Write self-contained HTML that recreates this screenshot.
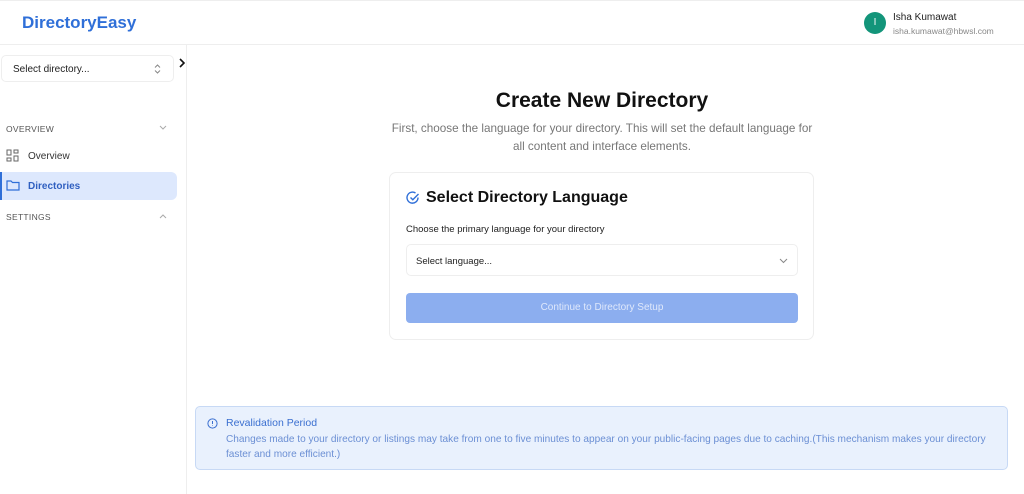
<!DOCTYPE html>
<html><head><style>
*{box-sizing:border-box;margin:0;padding:0}
body{width:1024px;height:494px;overflow:hidden;background:#fff;font-family:"Liberation Sans",sans-serif;position:relative;color:#111}
.hdr{position:absolute;left:0;top:0;width:1024px;height:45px;border-bottom:1px solid #eee;border-top:1px solid #eee}
.logo{position:absolute;left:22px;top:12px;font-size:17px;font-weight:bold;color:#2f6fd8}
.av{position:absolute;left:864px;top:11px;width:22px;height:22px;border-radius:50%;background:#13957a;color:#fff;font-size:10px;text-align:center;line-height:22px}
.nm{position:absolute;left:893px;top:11px;font-size:10px;color:#222}
.em{position:absolute;left:893px;top:25px;font-size:8.5px;color:#888}
.side{position:absolute;left:0;top:45px;width:187px;height:449px;border-right:1px solid #eee}
.sel{position:absolute;left:1px;top:55px;width:173px;height:27px;border:1px solid #eee;border-radius:5px;font-size:10px;padding:8px 11px;color:#222}
.sec{position:absolute;left:6px;font-size:8.5px;color:#555;letter-spacing:.3px}
.item{position:absolute;font-size:10px}
.act{position:absolute;left:0;top:172px;width:177px;height:28px;background:#dde8fd;border-radius:0 6px 6px 0;border-left:2px solid #2f6fd8}
h1{position:absolute;left:0;width:1204px;top:89px;text-align:center;font-size:21px;font-weight:bold}
.sub{position:absolute;left:340px;width:524px;top:120px;text-align:center;font-size:11.7px;line-height:18px;color:#777;white-space:nowrap}
.card{position:absolute;left:389px;top:172px;width:425px;height:168px;border:1px solid #eee;border-radius:7px}
.ct{position:absolute;left:36px;top:16px;font-size:16px;font-weight:bold}
.lab{position:absolute;left:16px;top:51px;font-size:9.5px;color:#222}
.inp{position:absolute;left:16px;top:71px;width:392px;height:32px;border:1px solid #eee;border-radius:5px;font-size:9.5px;padding:11px 9px;color:#222}
.btn{position:absolute;left:16px;top:120px;width:392px;height:30px;background:#8caeef;border-radius:4px;color:#dfe8fb;font-size:10px;text-align:center;line-height:30px}
.info{position:absolute;left:195px;top:406px;width:813px;height:64px;background:#e9f1fd;border:1px solid #c7d9f5;border-radius:5px}
.it{position:absolute;left:30px;top:10px;font-size:10.5px;color:#3a6fd0}
.ib{position:absolute;left:30px;top:25px;width:780px;font-size:10.1px;line-height:15px;color:#6b8fd4;white-space:nowrap}
</style></head><body>
<div class="hdr"><div class="logo">DirectoryEasy</div><div class="av">I</div><div class="nm">Isha Kumawat</div><div class="em">isha.kumawat@hbwsl.com</div></div>
<div class="side"></div>
<div class="sel">Select directory...<svg style="position:absolute;right:12px;top:8px" width="7" height="10"><path d="M1 3.5l2.5-2.5 2.5 2.5M1 6.5l2.5 2.5 2.5-2.5" stroke="#888" fill="none"/></svg></div>
<svg style="position:absolute;left:178px;top:58px" width="8" height="10"><path d="M2 1l4 4-4 4" stroke="#111" stroke-width="1.6" fill="none"/></svg>
<div class="sec" style="top:124px">OVERVIEW</div>
<svg style="position:absolute;left:159px;top:125px" width="8" height="6"><path d="M1 1l3 3 3-3" stroke="#aaa" fill="none"/></svg>
<svg style="position:absolute;left:6px;top:149px" width="13" height="13" fill="none" stroke="#666"><rect x="1" y="1" width="4" height="5"/><rect x="8" y="1" width="4" height="3"/><rect x="1" y="9" width="4" height="3"/><rect x="8" y="7" width="4" height="5"/></svg>
<div class="item" style="left:28px;top:151px;color:#333">Overview</div>
<div class="act"></div>
<svg style="position:absolute;left:6px;top:179px" width="14" height="12" fill="none" stroke="#2f6fd8" stroke-width="1.2"><path d="M1 2h4l1.5 1.5H13V11H1z"/></svg>
<div class="item" style="left:28px;top:181px;color:#2f5fc0;font-weight:bold">Directories</div>
<div class="sec" style="top:212px">SETTINGS</div>
<svg style="position:absolute;left:159px;top:213px" width="8" height="6"><path d="M1 5l3-3 3 3" stroke="#aaa" fill="none"/></svg>
<h1>Create New Directory</h1>
<div class="sub">First, choose the language for your directory. This will set the default language for<br>all content and interface elements.</div>
<div class="card">
<svg style="position:absolute;left:16px;top:18px" width="14" height="14" fill="none" stroke="#2f6fd8" stroke-width="1.4"><path d="M12 6.5A5.5 5.5 0 1 1 9.5 2"/><path d="M4.5 6.5l2.3 2.3L12.5 3"/></svg>
<div class="ct">Select Directory Language</div>
<div class="lab">Choose the primary language for your directory</div>
<div class="inp">Select language...<svg style="position:absolute;right:9px;top:13px" width="9" height="6"><path d="M1 1l3.5 3.5L8 1" stroke="#888" fill="none"/></svg></div>
<div class="btn">Continue to Directory Setup</div>
</div>
<div class="info">
<svg style="position:absolute;left:11px;top:11px" width="11" height="11" fill="none" stroke="#3a6fd0"><circle cx="5.5" cy="5.5" r="4.6"/><path d="M5.5 3v3M5.5 7.5v.5"/></svg>
<div class="it">Revalidation Period</div>
<div class="ib">Changes made to your directory or listings may take from one to five minutes to appear on your public-facing pages due to caching.(This mechanism makes your directory<br>faster and more efficient.)</div>
</div>
</body></html>
